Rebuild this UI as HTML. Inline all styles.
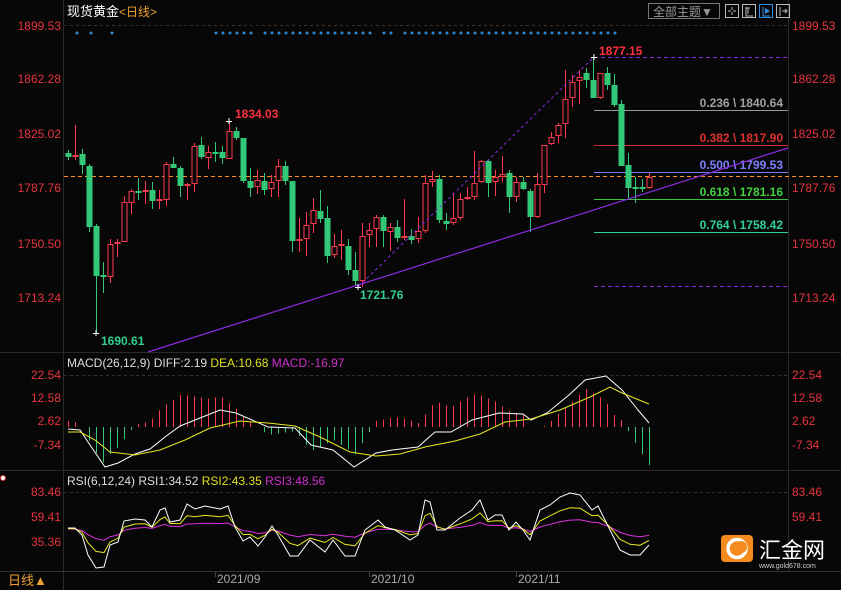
<!DOCTYPE html>
<html><head><meta charset="utf-8"><style>
html,body{margin:0;padding:0;background:#070707;width:841px;height:590px;overflow:hidden;font-family:"Liberation Sans","Noto Sans CJK SC",sans-serif}
svg{display:block}
</style></head><body>
<svg id="s" width="841" height="590" xmlns="http://www.w3.org/2000/svg" font-family="Liberation Sans, Noto Sans CJK SC, sans-serif">
<rect width="841" height="590" fill="#070707"/>
<!-- frame lines -->
<line x1="63.5" y1="0" x2="63.5" y2="590" stroke="#2a2a2a"/>
<line x1="788.5" y1="0" x2="788.5" y2="572" stroke="#2a2a2a"/>
<line x1="0" y1="352.5" x2="841" y2="352.5" stroke="#2a2a2a"/>
<line x1="0" y1="470.5" x2="841" y2="470.5" stroke="#2a2a2a"/>
<line x1="0" y1="571.5" x2="841" y2="571.5" stroke="#333"/>
<!-- header -->
<text x="67" y="16" fill="#fff" font-size="13">现货黄金</text>
<text x="119" y="16" fill="#f0a030" font-size="12">&lt;日线&gt;</text>
<rect x="648.5" y="3.5" width="71" height="15" fill="none" stroke="#777"/>
<text x="653" y="16" fill="#999" font-size="12">全部主题▼</text>
<g fill="none" stroke="#bbb">
<rect x="725.5" y="4.5" width="13" height="13"/><rect x="742.5" y="4.5" width="13" height="13"/>
<rect x="759.5" y="4.5" width="13" height="13" stroke="#3090e0"/><rect x="776.5" y="4.5" width="13" height="13"/>
<path d="M732 7v3M732 12v3M728 11h3M733 11h3"/>
<path d="M746 7v9h7M748 8v6M746 8h4"/>
<path d="M763 7v9h7" stroke="#3090e0"/><path d="M765 8l5 3-5 3z" fill="#3090e0" stroke="none"/>
<path d="M780 7v9M782 11h5M785 9l2 2-2 2"/>
</g>
<!-- axis labels -->
<g font-size="12" fill="#e8343f" text-anchor="end">
<text x="61" y="30">1899.53</text><text x="61" y="83">1862.28</text><text x="61" y="138">1825.02</text>
<text x="61" y="192">1787.76</text><text x="61" y="248">1750.50</text><text x="61" y="302">1713.24</text>
<text x="61" y="379">22.54</text><text x="61" y="402">12.58</text><text x="61" y="425">2.62</text><text x="61" y="449">-7.34</text>
<text x="61" y="496">83.46</text><text x="61" y="521">59.41</text><text x="61" y="546">35.36</text>
</g>
<g font-size="12" fill="#e8343f">
<text x="792" y="30">1899.53</text><text x="792" y="83">1862.28</text><text x="792" y="138">1825.02</text>
<text x="792" y="192">1787.76</text><text x="792" y="248">1750.50</text><text x="792" y="302">1713.24</text>
<text x="792" y="379">22.54</text><text x="792" y="402">12.58</text><text x="792" y="425">2.62</text><text x="792" y="449">-7.34</text>
<text x="792" y="496">83.46</text><text x="792" y="521">59.41</text>
</g>
<g stroke="#333" stroke-dasharray="3,3">
<line x1="64" y1="25.5" x2="788" y2="25.5"/><line x1="64" y1="375.5" x2="788" y2="375.5"/><line x1="64" y1="492.5" x2="788" y2="492.5"/>
</g>
<!-- fib lines -->
<line x1="594" y1="57.5" x2="788" y2="57.5" stroke="#8a2be2" stroke-dasharray="4,3"/>
<line x1="594" y1="286.5" x2="788" y2="286.5" stroke="#8a2be2" stroke-dasharray="4,3"/>
<line x1="594" y1="110.5" x2="788" y2="110.5" stroke="#999"/>
<line x1="594" y1="145.5" x2="788" y2="145.5" stroke="#d03030"/>
<line x1="594" y1="172.5" x2="788" y2="172.5" stroke="#7b7bff"/>
<line x1="594" y1="199.5" x2="788" y2="199.5" stroke="#3cc040"/>
<line x1="594" y1="232.5" x2="788" y2="232.5" stroke="#30d090"/>
<g font-size="12" font-weight="bold" text-anchor="end">
<text x="783" y="107" fill="#a0a0a0">0.236 \ 1840.64</text>
<text x="783" y="142" fill="#e03030">0.382 \ 1817.90</text>
<text x="783" y="169" fill="#8080ff">0.500 \ 1799.53</text>
<text x="783" y="196" fill="#40d040">0.618 \ 1781.16</text>
<text x="783" y="229" fill="#30d0a0">0.764 \ 1758.42</text>
</g>
<line x1="64" y1="176.5" x2="841" y2="176.5" stroke="#ff9020" stroke-dasharray="4,3"/>
<g id="cand"></g>
<line x1="148" y1="352" x2="788" y2="148" stroke="#8a2be2" stroke-width="1.2"/>
<line x1="358" y1="287" x2="594" y2="57" stroke="#8a2be2" stroke-dasharray="3,3"/>
<g font-size="12" font-weight="bold">
<text x="599" y="55" fill="#ff3040">1877.15</text>
<text x="235" y="118" fill="#ff3040">1834.03</text>
<text x="101" y="345" fill="#30d090">1690.61</text>
<text x="360" y="299" fill="#30d090">1721.76</text>
</g>
<g stroke="#fff"><path d="M591 57.5h6M594 54v6M226 121.5h6M229 118v6M93 333.5h6M96 330v6M355 287.5h6M358 284v6"/></g>
<!-- MACD -->
<text x="67" y="367" font-size="12" fill="#ddd">MACD(26,12,9) DIFF:2.19 <tspan fill="#e0e020">DEA:10.68</tspan> <tspan fill="#d030d0">MACD:-16.97</tspan></text>
<g id="macd"></g>
<!-- RSI -->
<text x="67" y="485" font-size="12" fill="#ddd">RSI(6,12,24) RSI1:34.52 <tspan fill="#e0e020">RSI2:43.35</tspan> <tspan fill="#d030d0">RSI3:48.56</tspan></text>
<circle cx="3" cy="478" r="2.5" fill="#fff" stroke="#e03030"/>
<g id="rsi"></g>
<!-- bottom -->
<text x="8" y="585" font-size="13" fill="#f0a030">日线▲</text>
<g fill="#aaa" font-size="12"><text x="217" y="583">2021/09</text><text x="371" y="583">2021/10</text><text x="518" y="583">2021/11</text></g>
<g stroke="#444"><line x1="215.5" y1="572" x2="215.5" y2="577"/><line x1="369.5" y1="572" x2="369.5" y2="577"/><line x1="516.5" y1="572" x2="516.5" y2="577"/></g>
<!-- logo -->
<rect x="721" y="535" width="32" height="27" rx="4" fill="#f58a1f"/>
<circle cx="737" cy="548.5" r="9" fill="none" stroke="#fff" stroke-width="3.5"/>
<circle cx="741" cy="547" r="6" fill="#f58a1f"/>
<text x="759" y="558" font-size="22" fill="#fff">汇金网</text>
<text x="759" y="568" font-size="7" fill="#ccc">www.gold678.com</text>
<g id="dots" fill="#2a8ad8"></g>
</svg>
<script>
var ns="http://www.w3.org/2000/svg";
function el(p,t,a){var e=document.createElementNS(ns,t);for(var k in a)e.setAttribute(k,a[k]);p.appendChild(e);return e;}
var R="#ff3850",G="#32c878";
// [x,color,bodyTop,bodyBot,wickTop,wickBot]
var C=[[68,'g',153,157,150,160],[75,'r',155,157,125,160],[82,'g',154,165,149,174],[89,'g',166,227,164,232],[96,'g',226,276,224,333],[103,'g',275,277,262,293],[110,'r',244,277,239,283],[117,'r',242,244,239,257],[124,'r',202,242,196,242],[131,'r',191,203,189,214],[138,'g',191,193,178,200],[145,'r',190,192,181,204],[152,'g',190,201,182,209],[159,'r',199,201,190,209],[166,'r',164,200,162,206],[173,'g',164,168,157,168],[180,'g',168,186,166,197],[187,'r',184,186,183,200],[194,'r',146,184,143,192],[201,'g',145,157,137,159],[208,'r',152,158,146,169],[215,'g',152,154,142,162],[222,'g',152,158,146,164],[229,'r',131,159,121,159],[236,'g',131,138,127,140],[243,'g',138,181,138,183],[250,'g',181,188,168,197],[257,'r',180,187,170,194],[264,'g',181,190,173,195],[271,'r',182,189,175,197],[278,'r',166,181,159,197],[285,'g',166,181,161,185],[292,'g',181,241,181,252],[299,'r',239,241,218,252],[306,'r',225,239,212,256],[313,'r',210,224,198,233],[320,'g',211,219,190,223],[327,'g',218,256,206,263],[334,'r',246,255,234,258],[341,'r',244,246,230,260],[348,'g',246,270,239,275],[355,'g',270,281,252,286],[362,'r',236,281,223,287],[369,'r',230,235,223,247],[376,'r',217,229,215,247],[383,'g',217,231,215,247],[390,'r',227,232,223,251],[397,'g',227,238,220,242],[404,'r',236,238,199,240],[411,'g',236,240,229,244],[418,'r',231,239,217,243],[425,'r',183,231,175,233],[432,'r',179,182,171,187],[439,'g',179,220,175,223],[446,'g',221,224,213,230],[453,'r',218,223,193,225],[460,'r',199,218,193,220],[467,'r',197,199,187,200],[474,'r',183,197,151,200],[481,'r',161,182,160,183],[488,'g',161,183,159,197],[495,'r',177,182,170,196],[502,'r',174,177,156,182],[509,'g',173,197,170,213],[516,'r',182,197,177,202],[523,'g',182,189,177,190],[530,'g',191,217,189,232],[537,'r',184,217,173,218],[544,'r',145,185,145,193],[551,'r',137,144,132,145],[558,'r',125,136,123,143],[565,'r',99,124,70,138],[572,'r',82,98,75,107],[579,'r',77,81,70,104],[586,'g',73,80,68,88],[593,'g',80,98,57,98],[600,'r',73,98,73,99],[607,'g',73,85,67,90],[614,'g',85,105,74,107],[621,'g',104,166,100,166],[628,'g',165,188,153,198],[635,'g',187,189,177,203],[642,'g',187,189,179,192],[649,'r',177,188,173,189]];
var g=document.getElementById('cand');
C.forEach(function(c){var col=c[1]=='r'?R:G;
el(g,'line',{x1:c[0]+.5,x2:c[0]+.5,y1:c[4],y2:c[5],stroke:col});
var h=Math.max(1,c[3]-c[2]);
if(c[1]=='g')el(g,'rect',{x:c[0]-2.5,y:c[2],width:6,height:h,fill:col});
else if(h<=2)el(g,'rect',{x:c[0]-2.5,y:c[2],width:6,height:2,fill:col});
else el(g,'rect',{x:c[0]-2,y:c[2]+.5,width:5,height:h-1,fill:'#070707',stroke:col});});
function interp(P,x){for(var i=0;i<P.length-1;i++){if(x>=P[i][0]&&x<=P[i+1][0]){var t=(x-P[i][0])/(P[i+1][0]-P[i][0]);return P[i][1]+t*(P[i+1][1]-P[i][1]);}}return P[P.length-1][1];}
function pl(p,P,col){el(p,'polyline',{points:P.map(function(a){return a.join(',')}).join(' '),fill:'none',stroke:col,'stroke-width':1});}
var DIFF=[[68,429],[80,430],[90,445],[105,467],[118,463],[135,454],[150,449],[165,437],[180,426],[200,418],[220,410],[236,413],[268,427],[295,428],[311,445],[333,450],[354,467],[376,453],[392,450],[418,447],[435,432],[451,432],[472,420],[499,413],[523,414],[531,420],[547,413],[569,395],[585,380],[606,376],[622,390],[638,410],[649,423]];
var DEA=[[68,432],[80,432],[95,440],[110,452],[135,455],[160,450],[185,440],[210,428],[240,421],[268,423],[295,426],[320,437],[350,452],[376,456],[400,454],[425,447],[455,441],[480,434],[505,422],[531,419],[560,410],[590,397],[610,387],[622,393],[649,404]];
var m=document.getElementById('macd');
C.forEach(function(c){var x=c[0]+.5;var v=2*(interp(DEA,c[0])-interp(DIFF,c[0]));var z=427;
if(Math.abs(v)<1)return;
el(m,'line',{x1:x,x2:x,y1:z,y2:z-v,stroke:v>0?'#ff3850':'#32c878'});});
pl(m,DIFF,'#fff');pl(m,DEA,'#e8e820');
var W=[[68,528],[75,528],[82,535],[88,555],[96,568],[104,567],[110,545],[118,542],[124,521],[135,519],[145,520],[152,527],[160,510],[165,508],[170,522],[180,520],[187,504],[195,509],[205,506],[220,509],[228,506],[235,527],[243,541],[250,537],[258,546],[265,537],[272,526],[278,535],[290,556],[298,556],[310,540],[325,552],[333,540],[345,556],[355,556],[365,530],[378,520],[385,527],[395,530],[410,540],[418,535],[425,500],[430,502],[437,530],[445,530],[460,518],[472,510],[480,500],[488,520],[495,515],[502,515],[509,530],[516,522],[523,530],[530,540],[540,510],[550,505],[560,497],[570,493],[580,495],[592,510],[598,506],[610,530],[620,550],[630,555],[640,555],[649,545]];
var r=document.getElementById('rsi');
function sm(P,k,mid,alpha){var out=[],prev=P[0][1];P.forEach(function(a){var v=mid+k*(a[1]-mid);prev=prev+alpha*(v-prev);out.push([a[0],Math.round(prev*10)/10]);});return out;}
pl(r,sm(W,0.3,530,0.6),'#e030e0');pl(r,sm(W,0.62,530,0.8),'#e8e820');pl(r,W,'#fff');
var d=document.getElementById('dots');
[77,91,112].forEach(function(x){el(d,'circle',{cx:x,cy:33,r:1.5})});
for(var x=216;x<=616;x+=7){if(x==258||x==377||x==398)continue;el(d,'circle',{cx:x,cy:33,r:1.5});}
</script>
</body></html>
